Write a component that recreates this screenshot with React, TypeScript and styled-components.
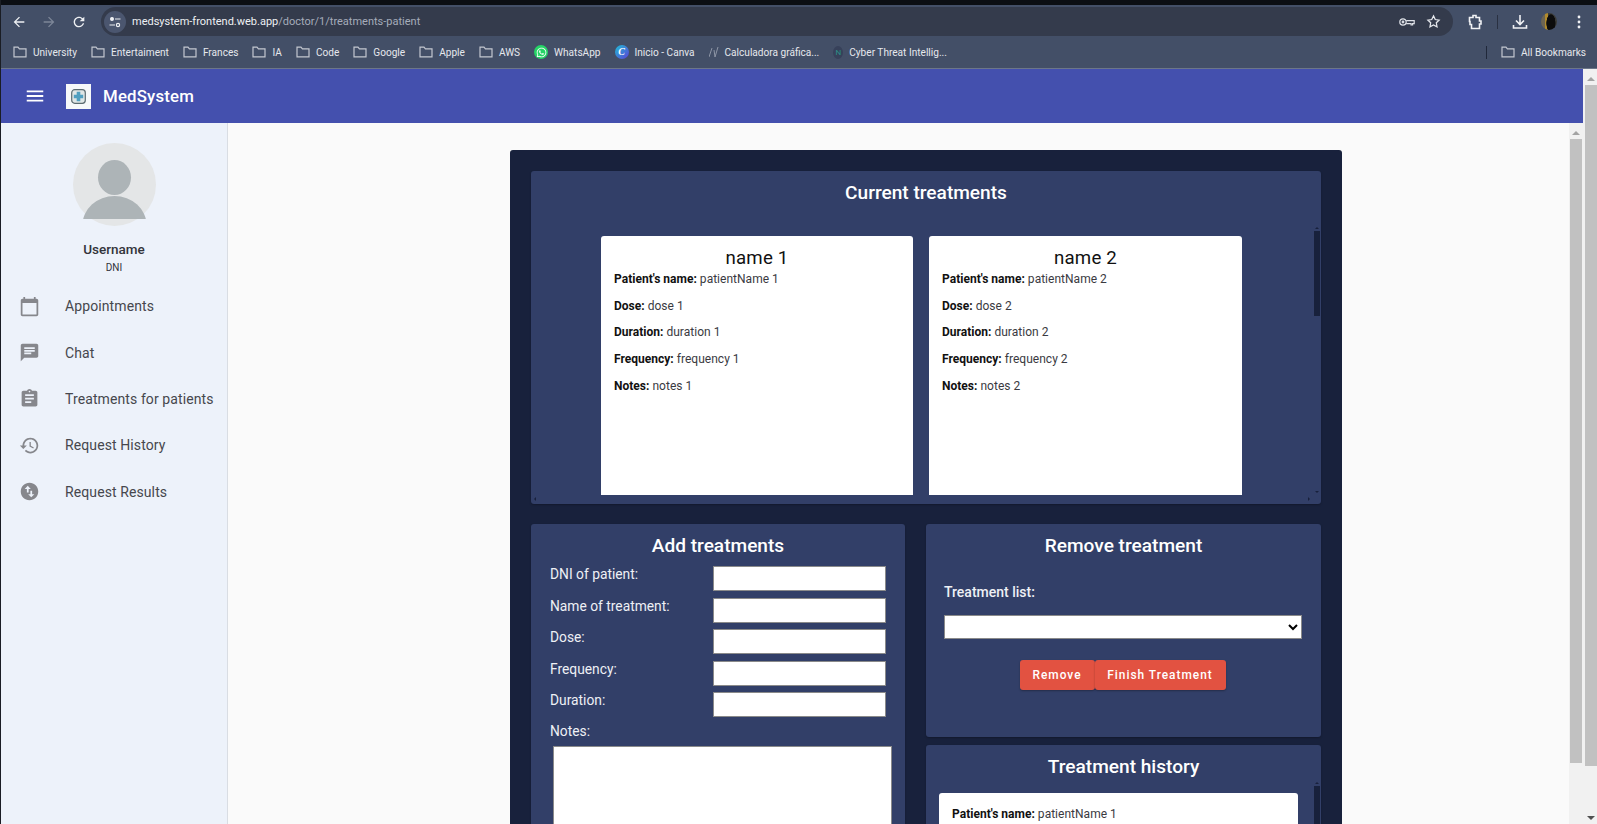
import styled, { createGlobalStyle } from "styled-components";
import { FaWhatsapp } from "react-icons/fa";

const GlobalStyle = createGlobalStyle`
  html, body {
    margin: 0;
    padding: 0;
    height: 824px;
    overflow: hidden;
    background: #fafafa;
    font-family: Roboto, "Liberation Sans", sans-serif;
  }
  * { box-sizing: border-box; }
`;

const Shell = styled.div`
  height: 824px;
  overflow: hidden;
  display: flex;
  flex-direction: column;
  border-left: 1px solid #1a1d24;
`;

/* browser chrome */
const TopStrip = styled.div`
  height: 5px;
  background: #0b0e13;
  margin-left: -1px;
`;

const Toolbar = styled.div`
  height: 33px;
  display: flex;
  align-items: center;
  background: #434f67;
  padding-left: 10px;
  color: #e6e8ed;
`;

const NavIcon = styled.svg<{ $dim?: boolean; $gap?: number }>`
  width: 16px;
  height: 16px;
  fill: ${({ $dim }) => ($dim ? "#7d8698" : "#eef0f3")};
  margin-right: ${({ $gap }) => $gap ?? 0}px;
  flex: none;
`;

const Omnibox = styled.div`
  width: 1352px;
  height: 29px;
  margin-left: 14px;
  display: flex;
  align-items: center;
  background: #343b4c;
  border-radius: 15px;
  padding: 0 12px 0 3px;
  font-family: Roboto, "Noto Sans", sans-serif;
  font-size: 11px;
`;

const TuneBadge = styled.span`
  width: 22px;
  height: 22px;
  border-radius: 50%;
  background: #4b566f;
  display: flex;
  align-items: center;
  justify-content: center;
  margin-right: 6px;
`;

const Host = styled.span`
  color: #eef0f3;
`;

const UrlPath = styled.span`
  color: #a5acba;
`;

const OmniActions = styled.div`
  margin-left: auto;
  display: flex;
  align-items: center;
  gap: 11px;
`;

const ToolActions = styled.div`
  display: flex;
  align-items: center;
  margin-left: 14px;
`;

const ToolSeparator = styled.span`
  width: 1px;
  height: 14px;
  background: #2a3142;
  margin: 0 14px;
`;

const AvatarDot = styled.span`
  width: 16px;
  height: 17px;
  border-radius: 50%;
  margin: 0 20px 0 13px;
  background: radial-gradient(ellipse 30% 55% at 62% 60%, #0c0c0c 90%, transparent 100%),
    linear-gradient(90deg, #6d6552 0 22%, #b08a2c 22% 42%, #3a3a36 42% 100%);
`;

const BookmarkBar = styled.div`
  height: 31px;
  display: flex;
  align-items: center;
  background: #434f67;
  border-bottom: 1px solid #6c7689;
  padding: 0 11px 2px 12px;
  gap: 14px;
  font-family: Roboto, "Noto Sans", sans-serif;
  font-size: 10.1px;
  color: #e6e8ed;
`;

const Bookmark = styled.span<{ $push?: boolean }>`
  display: flex;
  align-items: center;
  gap: 6px;
  white-space: nowrap;
  ${({ $push }) => $push && "margin-left: auto;"}
`;

const BarDivider = styled.span`
  width: 1px;
  height: 13px;
  background: #20283a;
`;

const FolderGlyph = styled.svg`
  width: 14px;
  height: 12px;
  fill: none;
  stroke: #c3c7d0;
  stroke-width: 1.2;
  flex: none;
`;

const WhatsBadge = styled.span`
  width: 14px;
  height: 14px;
  border-radius: 50%;
  background: #25d366;
  color: #fff;
  display: flex;
  align-items: center;
  justify-content: center;
  font-size: 11px;
`;

const CanvaBadge = styled.span`
  width: 14px;
  height: 14px;
  border-radius: 50%;
  background: linear-gradient(135deg, #1fc0d8, #5b3fd6);
  color: #fff;
  font: italic 700 10px "Liberation Serif", serif;
  text-align: center;
  line-height: 14px;
`;

const GraphGlyph = styled.svg`
  width: 10px;
  height: 12px;
  fill: none;
  stroke: #8d95a5;
  stroke-width: 1;
`;

const NotionBadge = styled.span`
  width: 10px;
  height: 13px;
  border-radius: 50%;
  background: #37415a;
  color: #2a8f86;
  font-size: 8px;
  line-height: 13px;
  text-align: center;
`;

/* app */
const Workspace = styled.div`
  flex: 1;
  min-height: 0;
  display: flex;
`;

const AppColumn = styled.div`
  flex: 1;
  min-width: 0;
  display: flex;
  flex-direction: column;
`;

const AppBar = styled.header`
  height: 54px;
  flex: none;
  background: #4450ae;
  display: flex;
  align-items: center;
  padding-left: 23px;
  color: #fff;
`;

const MenuIcon = styled.svg`
  width: 22px;
  height: 22px;
  fill: #fff;
  margin-right: 20px;
`;

const LogoBox = styled.span`
  width: 25px;
  height: 25px;
  background: #f6f8f9;
  display: flex;
  align-items: center;
  justify-content: center;
  margin-right: 12px;
`;

const Brand = styled.span`
  font-size: 16.8px;
  font-weight: 500;
  letter-spacing: 0.2px;
`;

const Body = styled.div`
  flex: 1;
  min-height: 0;
  display: flex;
`;

const Sidebar = styled.aside`
  width: 227px;
  flex: none;
  background: #edf2fa;
  border-right: 1px solid #d9dde3;
  padding-top: 20px;
`;

const Profile = styled.div`
  display: flex;
  flex-direction: column;
  align-items: center;
  margin-bottom: 7px;
`;

const AvatarImage = styled.svg`
  width: 83px;
  height: 83px;
  margin-bottom: 15px;
`;

const UserName = styled.div`
  font-size: 13.5px;
  font-weight: 500;
  line-height: 16px;
  color: #33343a;
  margin-bottom: 3px;
`;

const UserDni = styled.div`
  font-size: 10px;
  line-height: 16px;
  color: #33343a;
`;

const NavList = styled.nav`
  display: flex;
  flex-direction: column;
`;

const NavItem = styled.a`
  height: 46.4px;
  display: flex;
  align-items: center;
  padding-left: 18px;
  font-size: 14px;
  letter-spacing: 0.1px;
  color: #46474d;
  white-space: nowrap;
`;

const NavGlyph = styled.svg`
  width: 21px;
  height: 21px;
  fill: #86878c;
  margin-right: 25px;
  flex: none;
`;

const Main = styled.main`
  flex: 1;
  min-width: 0;
  background: #fafafa;
  padding: 27px 0 0 282px;
`;

const Board = styled.section`
  width: 832px;
  min-height: 800px;
  background: #18213c;
  border-radius: 3px;
  padding: 21px;
  display: flex;
  flex-direction: column;
  gap: 20px;
`;

const Panel = styled.div<{ $height?: number }>`
  position: relative;
  height: ${({ $height }) => ($height ? `${$height}px` : "auto")};
  background: #323f68;
  border-radius: 3px;
  box-shadow: 0 1px 2px rgba(0, 0, 0, 0.25);
`;

const PanelTitle = styled.h3`
  margin: 0;
  padding-top: 11px;
  height: 42px;
  font-size: 19.1px;
  line-height: 22px;
  font-weight: 500;
  text-align: center;
  color: #fff;
`;

const CardsRow = styled.div`
  display: flex;
  gap: 16px;
  padding: 23px 0 0 70px;
`;

const TreatmentCard = styled.article<{ $wide?: boolean }>`
  width: ${({ $wide }) => ($wide ? 313 : 312)}px;
  height: 259px;
  background: #fff;
  border-radius: 3px 3px 0 0;
  padding: 11px 13px 0;
`;

const CardName = styled.h4`
  margin: 0 0 3px;
  font-size: 18.7px;
  line-height: 22px;
  font-weight: 400;
  letter-spacing: 0.2px;
  text-align: center;
  color: #111;
`;

const Detail = styled.p`
  margin: 0 0 12.7px;
  font-size: 12px;
  line-height: 14px;
  letter-spacing: 0.02px;
  color: #3a3a3f;
`;

const DetailKey = styled.b`
  font-weight: 700;
  color: #111;
`;

const Columns = styled.div`
  display: grid;
  grid-template-columns: 374px 395px;
  gap: 21px;
  align-items: start;
`;

const Stack = styled.div`
  display: flex;
  flex-direction: column;
  gap: 8px;
`;

const FormRows = styled.div`
  display: flex;
  flex-direction: column;
  gap: 6.6px;
  padding: 0 19px;
`;

const FormRow = styled.div`
  display: flex;
  justify-content: space-between;
`;

const FieldLabel = styled.label`
  font-size: 13.8px;
  line-height: 16px;
  color: #eef0f5;
`;

const TextField = styled.input`
  width: 173px;
  height: 25px;
  background: #fff;
  border: 1px solid #8a8a8a;
  padding: 0;
`;

const NotesLabel = styled(FieldLabel)`
  display: block;
  padding: 6px 0 7px 19px;
`;

const NotesArea = styled.textarea`
  display: block;
  width: 339px;
  height: 180px;
  margin-left: 22px;
  background: #fff;
  border: 1px solid #8a8a8a;
  resize: none;
`;

const RemoveBody = styled.div`
  padding: 18px 20px 0 18px;
`;

const StrongLabel = styled.div`
  font-size: 14px;
  line-height: 16px;
  font-weight: 500;
  color: #eef0f5;
  margin-bottom: 15px;
`;

const TreatmentSelect = styled.select`
  display: block;
  width: 358px;
  height: 24px;
  background: #fff;
  border: 1px solid #8a8a8a;
  font-size: 13px;
`;

const ButtonRow = styled.div`
  display: flex;
  justify-content: center;
  margin-top: 21px;
`;

const RedButton = styled.button<{ $w: number }>`
  width: ${({ $w }) => $w}px;
  height: 30px;
  border: 0;
  border-radius: 3px;
  background: #e25241;
  color: #fff;
  font-family: Roboto, sans-serif;
  font-size: 11.9px;
  font-weight: 500;
  letter-spacing: 1px;
  padding: 0;
  box-shadow: 0 1px 2px rgba(0, 0, 0, 0.3);
`;

const HistoryCard = styled.article`
  width: 359px;
  height: 300px;
  margin: 6px 0 0 13px;
  background: #fff;
  border-radius: 3px 3px 0 0;
  padding: 14px 13px;
`;

/* scrollbars inside the panels lie over the panel */
const PanelBar = styled.div<{ $top: number; $bottom?: number }>`
  position: absolute;
  right: 1px;
  top: ${({ $top }) => $top}px;
  ${({ $bottom }) => ($bottom !== undefined ? `bottom: ${$bottom}px;` : "")}
  width: 6px;
  display: flex;
  flex-direction: column;
  align-items: center;
`;

const PanelThumb = styled.div<{ $h: number }>`
  width: 6px;
  height: ${({ $h }) => $h}px;
  background: #18213c;
  margin-top: 2px;
`;

const Tri = styled.span<{ $dir: "up" | "down" | "left" | "right"; $size?: number; $color?: string }>`
  width: 0;
  height: 0;
  flex: none;
  ${({ $dir, $size = 2, $color = "#18213c" }) => {
    const solid = `${$size}px solid ${$color}`;
    const clear = `${$size}px solid transparent`;
    if ($dir === "up") return `border-left:${clear};border-right:${clear};border-bottom:${solid};`;
    if ($dir === "down") return `border-left:${clear};border-right:${clear};border-top:${solid};`;
    if ($dir === "left") return `border-top:${clear};border-bottom:${clear};border-right:${solid};`;
    return `border-top:${clear};border-bottom:${clear};border-left:${solid};`;
  }}
`;

const PushedTri = styled(Tri)`
  margin-top: auto;
`;

const PanelHorizontal = styled.div`
  position: absolute;
  left: 3px;
  right: 11px;
  bottom: 3px;
  display: flex;
  justify-content: space-between;
`;

/* page scrollbars */
const PageBar = styled.div<{ $w: number }>`
  width: ${({ $w }) => $w}px;
  flex: none;
  background: #f1f1f1;
  display: flex;
  flex-direction: column;
  align-items: flex-end;
  padding: 6px 0 2px;
`;

const PageArrow = styled.div<{ $end?: boolean }>`
  width: 12px;
  height: 8px;
  display: flex;
  justify-content: center;
  align-items: center;
  ${({ $end }) => $end && "margin-top: auto;"}
`;

const PageThumb = styled.div<{ $h: number }>`
  width: 12px;
  height: ${({ $h }) => $h}px;
  background: #c1c1c1;
  margin-top: 2px;
`;

const InnerBar = styled(PageBar)`
  padding-right: 1px;
`;

const Folder = () => (
  <FolderGlyph viewBox="0 0 14 12">
    <path d="M1 1.2h4l1.4 1.6H13v8H1z" />
  </FolderGlyph>
);

const folders = ["University", "Entertaiment", "Frances", "IA", "Code", "Google", "Apple", "AWS"];

const navItems = [
  {
    label: "Appointments",
    d: "M20 3h-1V1h-2v2H7V1H5v2H4c-1.1 0-2 .9-2 2v16c0 1.1.9 2 2 2h16c1.1 0 2-.9 2-2V5c0-1.1-.9-2-2-2zm0 18H4V8h16v13z",
  },
  {
    label: "Chat",
    d: "M20 2H4c-1.1 0-1.99.9-1.99 2L2 22l4-4h14c1.1 0 2-.9 2-2V4c0-1.1-.9-2-2-2zM6 9h12v2H6V9zm8 5H6v-2h8v2zm4-6H6V6h12v2z",
  },
  {
    label: "Treatments for patients",
    d: "M19 3h-4.18C14.4 1.84 13.3 1 12 1c-1.3 0-2.4.84-2.82 2H5c-1.1 0-2 .9-2 2v14c0 1.1.9 2 2 2h14c1.1 0 2-.9 2-2V5c0-1.1-.9-2-2-2zm-7 0c.55 0 1 .45 1 1s-.45 1-1 1-1-.45-1-1 .45-1 1-1zm2 14H7v-2h7v2zm3-4H7v-2h10v2zm0-4H7V7h10v2z",
  },
  {
    label: "Request History",
    d: "M13 3c-4.97 0-9 4.03-9 9H1l3.89 3.89.07.14L9 12H6c0-3.87 3.13-7 7-7s7 3.13 7 7-3.13 7-7 7c-1.93 0-3.68-.79-4.94-2.06l-1.42 1.42C8.27 19.99 10.51 21 13 21c4.97 0 9-4.03 9-9s-4.03-9-9-9zm-1 5v5l4.28 2.54.72-1.21-3.5-2.08V8H12z",
  },
  {
    label: "Request Results",
    d: "M12 2C6.48 2 2 6.48 2 12s4.48 10 10 10 10-4.48 10-10S17.52 2 12 2zM6.5 9L10 5.5 13.5 9H11v4H9V9H6.5zm11 6L14 18.5 10.5 15H13v-4h2v4h2.5z",
  },
];

const Treatment = ({ n, wide }: { n: number; wide?: boolean }) => (
  <TreatmentCard $wide={wide}>
    <CardName>name {n}</CardName>
    <Detail>
      <DetailKey>Patient's name:</DetailKey> patientName {n}
    </Detail>
    <Detail>
      <DetailKey>Dose:</DetailKey> dose {n}
    </Detail>
    <Detail>
      <DetailKey>Duration:</DetailKey> duration {n}
    </Detail>
    <Detail>
      <DetailKey>Frequency:</DetailKey> frequency {n}
    </Detail>
    <Detail>
      <DetailKey>Notes:</DetailKey> notes {n}
    </Detail>
  </TreatmentCard>
);

const fields = ["DNI of patient:", "Name of treatment:", "Dose:", "Frequency:", "Duration:"];

export default function App() {
  return (
    <>
      <GlobalStyle />
      <Shell>
        <TopStrip />
        <Toolbar>
          <NavIcon viewBox="0 0 24 24" $gap={14}>
            <path d="M20 11H7.83l5.59-5.59L12 4l-8 8 8 8 1.41-1.41L7.83 13H20v-2z" />
          </NavIcon>
          <NavIcon viewBox="0 0 24 24" $dim $gap={14}>
            <path d="M12 4l-1.41 1.41L16.17 11H4v2h12.17l-5.58 5.59L12 20l8-8z" />
          </NavIcon>
          <NavIcon viewBox="0 0 24 24">
            <path d="M17.65 6.35C16.2 4.9 14.21 4 12 4c-4.42 0-7.99 3.58-7.99 8s3.57 8 7.99 8c3.73 0 6.84-2.55 7.73-6h-2.08c-.82 2.33-3.04 4-5.65 4-3.31 0-6-2.69-6-6s2.69-6 6-6c1.66 0 3.14.69 4.22 1.78L13 11h7V4l-2.35 2.35z" />
          </NavIcon>
          <Omnibox>
            <TuneBadge>
              <svg width="12" height="12" viewBox="0 0 12 12" fill="none" stroke="#eef0f3" strokeWidth="1.2">
                <circle cx="3" cy="3" r="1.4" fill="#eef0f3" />
                <path d="M6 3h5.5M.5 9H6" />
                <circle cx="9" cy="9" r="1.6" />
              </svg>
            </TuneBadge>
            <Host>medsystem-frontend.web.app</Host>
            <UrlPath>/doctor/1/treatments-patient</UrlPath>
            <OmniActions>
              <svg width="16" height="10" viewBox="0 0 16 10" fill="none" stroke="#dfe2e8" strokeWidth="1.2">
                <circle cx="4" cy="5" r="3.2" />
                <circle cx="4" cy="5" r="0.8" />
                <path d="M7.2 3.6h8v3h-1.6V8h-1.5V6.6H7.2" />
              </svg>
              <svg width="15" height="15" viewBox="0 0 24 24" fill="none" stroke="#e6e8ed" strokeWidth="2">
                <path d="M12 3l2.8 5.8 6.2.9-4.5 4.4 1.1 6.3L12 17.4l-5.6 3 1.1-6.3L3 9.7l6.2-.9z" />
              </svg>
            </OmniActions>
          </Omnibox>
          <ToolActions>
            <svg width="16" height="16" viewBox="0 0 16 16" fill="none" stroke="#f1f2f5" strokeWidth="1.6">
              <path d="M2.5 3.5H6V1.5h3v2h3.5V7H14v3h-1.5v4.5h-8V10.5H3V7.5H2.5z" />
            </svg>
            <ToolSeparator />
            <svg width="16" height="16" viewBox="0 0 16 16" fill="none" stroke="#f1f2f5" strokeWidth="1.6">
              <path d="M8 1v9M4 6.5L8 10.5l4-4M1.5 11v3h13v-3" />
            </svg>
            <AvatarDot />
            <svg width="4" height="14" viewBox="0 0 4 14" fill="#f1f2f5">
              <circle cx="2" cy="2" r="1.4" />
              <circle cx="2" cy="7" r="1.4" />
              <circle cx="2" cy="12" r="1.4" />
            </svg>
          </ToolActions>
        </Toolbar>
        <BookmarkBar>
          {folders.map((name) => (
            <Bookmark key={name}>
              <Folder />
              {name}
            </Bookmark>
          ))}
          <Bookmark>
            <WhatsBadge>
              <FaWhatsapp />
            </WhatsBadge>
            WhatsApp
          </Bookmark>
          <Bookmark>
            <CanvaBadge>C</CanvaBadge>
            Inicio - Canva
          </Bookmark>
          <Bookmark>
            <GraphGlyph viewBox="0 0 10 12">
              <path d="M0 11L3 2M5 4l1 7 3-10" />
            </GraphGlyph>
            Calculadora gráfica...
          </Bookmark>
          <Bookmark>
            <NotionBadge>N</NotionBadge>
            Cyber Threat Intellig...
          </Bookmark>
          <Bookmark $push>
            <BarDivider />
          </Bookmark>
          <Bookmark>
            <Folder />
            All Bookmarks
          </Bookmark>
        </BookmarkBar>
        <Workspace>
          <AppColumn>
            <AppBar>
              <MenuIcon viewBox="0 0 24 24">
                <path d="M3 18h18v-2H3v2zm0-5h18v-2H3v2zm0-7v2h18V6H3z" />
              </MenuIcon>
              <LogoBox>
                <svg width="15" height="15" viewBox="0 0 15 15">
                  <rect x="0.7" y="0.7" width="13.6" height="13.6" rx="3" fill="#dfe6e6" stroke="#5b6b70" strokeWidth="1.2" />
                  <path d="M5.7 2.8h3.6v2.9h2.9v3.6H9.3v2.9H5.7V9.3H2.8V5.7h2.9z" fill="#4f9fc0" />
                </svg>
              </LogoBox>
              <Brand>MedSystem</Brand>
            </AppBar>
            <Body>
              <Sidebar>
                <Profile>
                  <AvatarImage viewBox="0 0 83 83">
                    <clipPath id="avatar-clip">
                      <rect x="0" y="0" width="83" height="76" />
                    </clipPath>
                    <circle cx="41.5" cy="41.5" r="41.5" fill="#e4e6e7" />
                    <ellipse cx="41.5" cy="34.5" rx="16.5" ry="17.5" fill="#adb4b7" />
                    <ellipse cx="41.5" cy="82" rx="32" ry="29" fill="#adb4b7" clipPath="url(#avatar-clip)" />
                  </AvatarImage>
                  <UserName>Username</UserName>
                  <UserDni>DNI</UserDni>
                </Profile>
                <NavList>
                  {navItems.map((item) => (
                    <NavItem key={item.label}>
                      <NavGlyph viewBox="0 0 24 24">
                        <path d={item.d} />
                      </NavGlyph>
                      {item.label}
                    </NavItem>
                  ))}
                </NavList>
              </Sidebar>
              <Main>
                <Board>
                  <Panel $height={333}>
                    <PanelTitle>Current treatments</PanelTitle>
                    <CardsRow>
                      <Treatment n={1} />
                      <Treatment n={2} wide />
                    </CardsRow>
                    <PanelBar $top={56} $bottom={11}>
                      <Tri $dir="up" />
                      <PanelThumb $h={85} />
                      <PushedTri $dir="down" />
                    </PanelBar>
                    <PanelHorizontal>
                      <Tri $dir="left" />
                      <Tri $dir="right" />
                    </PanelHorizontal>
                  </Panel>
                  <Columns>
                    <Panel $height={420}>
                      <PanelTitle>Add treatments</PanelTitle>
                      <FormRows>
                        {fields.map((field) => (
                          <FormRow key={field}>
                            <FieldLabel>{field}</FieldLabel>
                            <TextField />
                          </FormRow>
                        ))}
                      </FormRows>
                      <NotesLabel>Notes:</NotesLabel>
                      <NotesArea />
                    </Panel>
                    <Stack>
                      <Panel $height={213}>
                        <PanelTitle>Remove treatment</PanelTitle>
                        <RemoveBody>
                          <StrongLabel>Treatment list:</StrongLabel>
                          <TreatmentSelect />
                          <ButtonRow>
                            <RedButton $w={75}>Remove</RedButton>
                            <RedButton $w={131}>Finish Treatment</RedButton>
                          </ButtonRow>
                        </RemoveBody>
                      </Panel>
                      <Panel $height={200}>
                        <PanelTitle>Treatment history</PanelTitle>
                        <HistoryCard>
                          <Detail>
                            <DetailKey>Patient's name:</DetailKey> patientName 1
                          </Detail>
                        </HistoryCard>
                        <PanelBar $top={37}>
                          <Tri $dir="up" />
                          <PanelThumb $h={85} />
                        </PanelBar>
                      </Panel>
                    </Stack>
                  </Columns>
                </Board>
              </Main>
              <InnerBar $w={14}>
                <PageArrow>
                  <Tri $dir="up" $size={4} $color="#a3a3a3" />
                </PageArrow>
                <PageThumb $h={624} />
              </InnerBar>
            </Body>
          </AppColumn>
          <PageBar $w={14}>
            <PageArrow>
              <Tri $dir="up" $size={4} $color="#a3a3a3" />
            </PageArrow>
            <PageThumb $h={681} />
            <PageArrow $end>
              <Tri $dir="down" $size={4} $color="#505050" />
            </PageArrow>
          </PageBar>
        </Workspace>
      </Shell>
    </>
  );
}
